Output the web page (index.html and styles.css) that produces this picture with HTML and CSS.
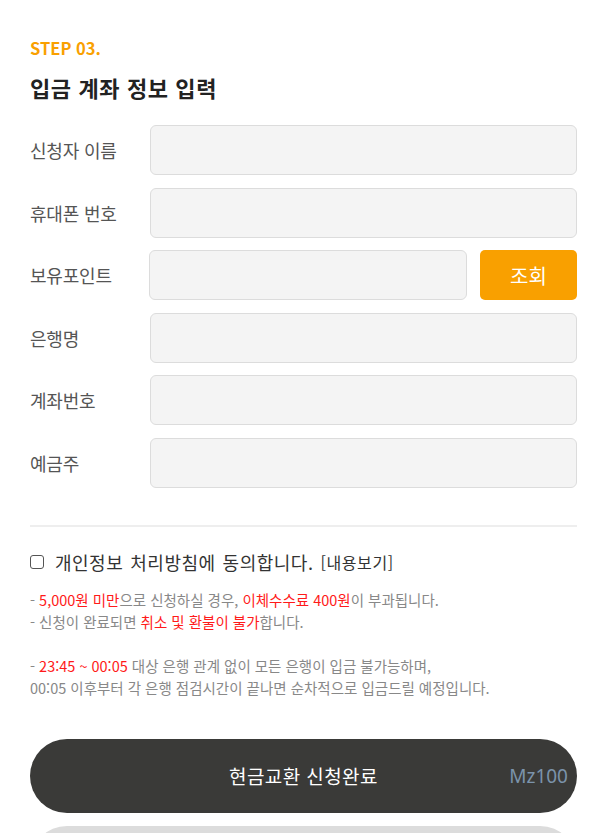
FILE: index.html
```html
<!DOCTYPE html>
<html lang="ko">
<head>
<meta charset="utf-8">
<title>STEP 03. 입금 계좌 정보 입력</title>
<link rel="stylesheet" href="styles.css">
</head>
<body>
<div class="wrap">
  <p class="step">STEP 03.</p>
  <h2 class="title">입금 계좌 정보 입력</h2>

  <form class="form">
    <div class="row">
      <label class="label">신청자 이름</label>
      <input class="field" type="text">
    </div>
    <div class="row">
      <label class="label">휴대폰 번호</label>
      <input class="field" type="text">
    </div>
    <div class="row">
      <label class="label">보유포인트</label>
      <input class="field field-point" type="text">
      <button type="button" class="btn-check">조회</button>
    </div>
    <div class="row">
      <label class="label">은행명</label>
      <input class="field" type="text">
    </div>
    <div class="row">
      <label class="label">계좌번호</label>
      <input class="field" type="text">
    </div>
    <div class="row">
      <label class="label">예금주</label>
      <input class="field" type="text">
    </div>
  </form>

  <hr class="divider">

  <div class="agree">
    <input type="checkbox" class="check" id="agree">
    <label for="agree" class="agree-text">개인정보 처리방침에 동의합니다.</label>
    <a class="view">[내용보기]</a>
  </div>

  <div class="notice">
    <p>- <span class="red">5,000원 미만</span>으로 신청하실 경우, <span class="red">이체수수료 400원</span>이 부과됩니다.</p>
    <p>- 신청이 완료되면 <span class="red">취소 및 환불이 불가</span>합니다.</p>
    <p class="blank">&nbsp;</p>
    <p>- <span class="red">23:45 ~ 00:05</span> 대상 은행 관계 없이 모든 은행이 입금 불가능하며,</p>
    <p>00:05 이후부터 각 은행 점검시간이 끝나면 순차적으로 입금드릴 예정입니다.</p>
  </div>

  <button type="button" class="btn-submit">현금교환 신청완료<span class="badge">Mz100</span></button>
  <button type="button" class="btn-gray"></button>
</div>
</body>
</html>
```
FILE: styles.css
```css
* { box-sizing: border-box; }
html, body { margin: 0; padding: 0; background: #fff; }
body {
  font-family: "Noto Sans CJK KR", "Noto Sans", sans-serif;
  color: #555;
}
.wrap {
  padding: 38px 32px 0 30px;
}
.step {
  margin: 0;
  font-size: 16.5px;
  line-height: 20px;
  font-weight: 700;
  color: #f9a000;
  letter-spacing: 0;
}
.title {
  margin: 14px 0 0;
  font-size: 22px;
  line-height: 30px;
  font-weight: 700;
  color: #222;
  letter-spacing: 0.6px;
}
.form {
  margin-top: 23px;
  display: flex;
  flex-direction: column;
  gap: 12.5px;
}
.row {
  display: flex;
  align-items: center;
  height: 50px;
}
.label {
  width: 120px;
  flex: none;
  font-size: 18px;
  color: #555;
  letter-spacing: -0.2px;
}
.field {
  flex: 1;
  height: 50px;
  background: #f4f4f4;
  border: 1px solid #dcdcdc;
  border-radius: 6px;
  outline: none;
  font-family: inherit;
  font-size: 16px;
  padding: 0 12px;
}
.field-point {
  margin-left: -1px;
}
.btn-check {
  flex: none;
  width: 97px;
  height: 50px;
  margin-left: 13px;
  background: #f9a000;
  border: none;
  border-radius: 5px;
  color: #fff;
  font-family: inherit;
  font-size: 20px;
  letter-spacing: 0;
}
.divider {
  margin: 37px 0 0;
  border: none;
  border-top: 2px solid #eee;
  height: 0;
}
.agree {
  margin-top: 23px;
  display: flex;
  align-items: center;
  height: 24px;
}
.check {
  -webkit-appearance: none;
  appearance: none;
  width: 14px;
  height: 14px;
  margin: 0 11px 0 0;
  border: 1.3px solid #555;
  border-radius: 3px;
  background: #fff;
  flex: none;
}
.agree-text {
  font-size: 18px;
  color: #333;
  letter-spacing: 0.5px;
  word-spacing: 1.5px;
}
.view {
  margin-left: 7px;
  font-size: 16px;
  color: #333;
  letter-spacing: 0.6px;
}
.notice {
  margin-top: 15px;
  font-size: 14.5px;
  line-height: 22px;
  color: #888;
  letter-spacing: 0;
}
.notice p { margin: 0; }
.red { color: #ff1a1a; }
.btn-submit {
  position: relative;
  display: block;
  width: 100%;
  height: 74px;
  margin-top: 40px;
  background: #3a3a38;
  border: none;
  border-radius: 37px;
  color: #fff;
  font-family: inherit;
  font-size: 19px;
  letter-spacing: 0.4px;
}
.badge {
  position: absolute;
  right: 9px;
  top: 50%;
  transform: translateY(-50%);
  font-family: "Noto Sans", "Open Sans", sans-serif;
  font-size: 19px;
  color: #7b93ab;
  letter-spacing: 0;
}
.btn-gray {
  display: block;
  width: 100%;
  height: 74px;
  margin-top: 13px;
  background: #dcdcdc;
  border: none;
  border-radius: 37px;
}
```
